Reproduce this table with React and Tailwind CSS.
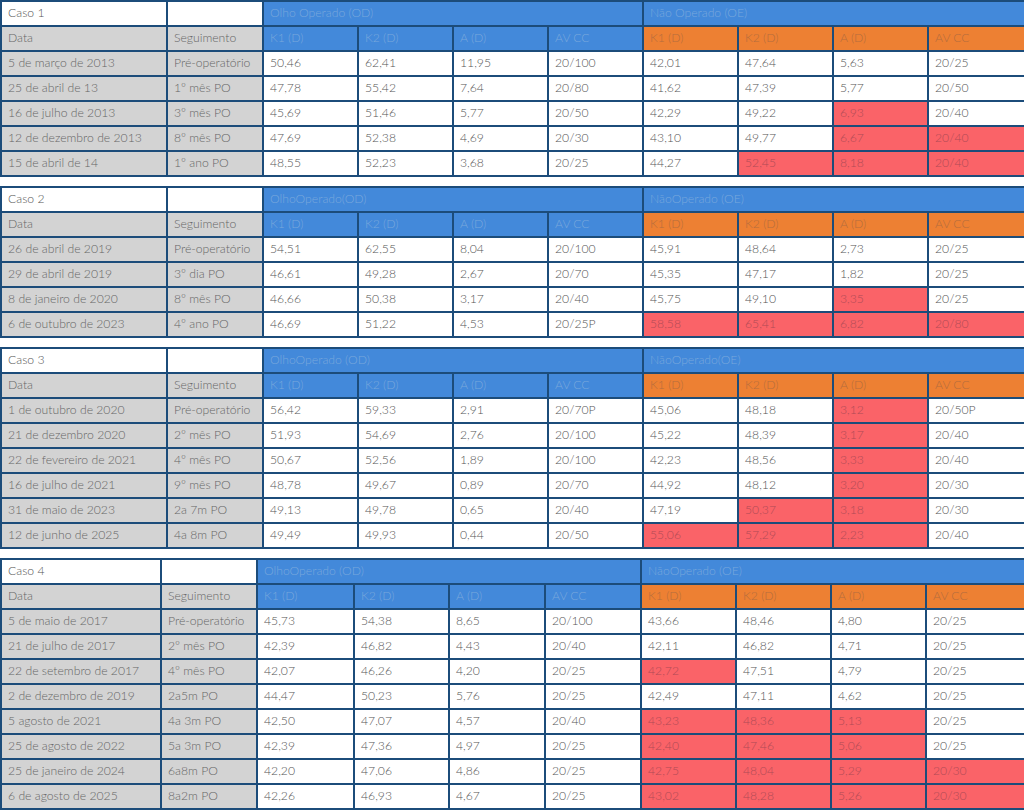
import React from "react";

const WIDE = [166, 96, 95, 95, 95, 95, 95, 95, 95, 97];
const NARROW = [160, 96, 97, 95, 96, 96, 95, 95, 95, 99];

// oe mask: "x" marks a red cell among the 4 OE values
const casos = [
  {
    title: "Caso 1",
    od: "Olho Operado (OD)",
    oe: "Não Operado (OE)",
    widths: WIDE,
    rows: [
      ["5 de março de 2013", "Pré-operatório", ["50,46", "62,41", "11,95", "20/100"], ["42,01", "47,64", "5,63", "20/25"], "...."],
      ["25 de abril de 13", "1º mês PO", ["47,78", "55,42", "7,64", "20/80"], ["41,62", "47,39", "5,77", "20/50"], "...."],
      ["16 de julho de 2013", "3º mês PO", ["45,69", "51,46", "5,77", "20/50"], ["42,29", "49,22", "6,93", "20/40"], "..x."],
      ["12 de dezembro de 2013", "8º mês PO", ["47,69", "52,38", "4,69", "20/30"], ["43,10", "49,77", "6,67", "20/40"], "..xx"],
      ["15 de abril de 14", "1º ano PO", ["48,55", "52,23", "3,68", "20/25"], ["44,27", "52,45", "8,18", "20/40"], ".xxx"],
    ],
  },
  {
    title: "Caso 2",
    od: "OlhoOperado(OD)",
    oe: "NãoOperado (OE)",
    widths: WIDE,
    rows: [
      ["26 de abril de 2019", "Pré-operatório", ["54,51", "62,55", "8,04", "20/100"], ["45,91", "48,64", "2,73", "20/25"], "...."],
      ["29 de abril de 2019", "3º dia PO", ["46,61", "49,28", "2,67", "20/70"], ["45,35", "47,17", "1,82", "20/25"], "...."],
      ["8 de janeiro de 2020", "8º mês PO", ["46,66", "50,38", "3,17", "20/40"], ["45,75", "49,10", "3,35", "20/25"], "..x."],
      ["6 de outubro de 2023", "4º ano PO", ["46,69", "51,22", "4,53", "20/25P"], ["58,58", "65,41", "6,82", "20/80"], "xxxx"],
    ],
  },
  {
    title: "Caso 3",
    od: "OlhoOperado (OD)",
    oe: "NãoOperado(OE)",
    widths: WIDE,
    rows: [
      ["1 de outubro de 2020", "Pré-operatório", ["56,42", "59,33", "2,91", "20/70P"], ["45,06", "48,18", "3,12", "20/50P"], "..x."],
      ["21 de dezembro 2020", "2º mês PO", ["51,93", "54,69", "2,76", "20/100"], ["45,22", "48,39", "3,17", "20/40"], "..x."],
      ["22 de fevereiro de 2021", "4º mês PO", ["50,67", "52,56", "1,89", "20/100"], ["42,23", "48,56", "3,33", "20/40"], "..x."],
      ["16 de julho de 2021", "9º mês PO", ["48,78", "49,67", "0,89", "20/70"], ["44,92", "48,12", "3,20", "20/30"], "..x."],
      ["31 de maio de 2023", "2a 7m PO", ["49,13", "49,78", "0,65", "20/40"], ["47,19", "50,37", "3,18", "20/30"], ".xx."],
      ["12 de junho de 2025", "4a 8m PO", ["49,49", "49,93", "0,44", "20/50"], ["55,06", "57,29", "2,23", "20/40"], "xxx."],
    ],
  },
  {
    title: "Caso 4",
    od: "OlhoOperado (OD)",
    oe: "NãoOperado (OE)",
    widths: NARROW,
    rows: [
      ["5 de maio de 2017", "Pré-operatório", ["45,73", "54,38", "8,65", "20/100"], ["43,66", "48,46", "4,80", "20/25"], "...."],
      ["21 de julho de 2017", "2º mês PO", ["42,39", "46,82", "4,43", "20/40"], ["42,11", "46,82", "4,71", "20/25"], "...."],
      ["22 de setembro de 2017", "4º mês PO", ["42,07", "46,26", "4,20", "20/25"], ["42,72", "47,51", "4,79", "20/25"], "x..."],
      ["2 de dezembro de 2019", "2a5m PO", ["44,47", "50,23", "5,76", "20/25"], ["42,49", "47,11", "4,62", "20/25"], "...."],
      ["5 agosto de 2021", "4a 3m PO", ["42,50", "47,07", "4,57", "20/40"], ["43,23", "48,36", "5,13", "20/25"], "xxx."],
      ["25 de agosto de 2022", "5a 3m PO", ["42,39", "47,36", "4,97", "20/25"], ["42,40", "47,46", "5,06", "20/25"], "xxx."],
      ["25 de janeiro de 2024", "6a8m PO", ["42,20", "47,06", "4,86", "20/25"], ["42,75", "48,04", "5,29", "20/30"], "xxxx"],
      ["6 de agosto de 2025", "8a2m PO", ["42,26", "46,93", "4,67", "20/25"], ["43,02", "48,28", "5,26", "20/30"], "xxxx"],
    ],
  },
];

const cell = "border-2 border-[#1c4c7a] px-[6px] h-[25px] whitespace-nowrap overflow-hidden";
const white = "bg-white text-[#555555]";
const gray = "bg-[#d3d3d3] text-[#666666]";
const blue = "bg-[#4389da] text-[#79a8dc]";
const orange = "bg-[#ed8033] text-[#b46d3e]";
const red = "bg-[#fa6368] text-[#b04b56]";

function CasoTable({ caso }) {
  return (
    <table className="w-[1024px] table-fixed border-collapse border-2 border-[#1c4c7a]">
      <colgroup>
        {caso.widths.map((w, i) => (
          <col key={i} style={{ width: w }} />
        ))}
      </colgroup>
      <tbody>
        <tr>
          <td className={`${cell} ${white}`}>{caso.title}</td>
          <td className={`${cell} ${white}`}></td>
          <td colSpan={4} className={`${cell} ${blue}`}>{caso.od}</td>
          <td colSpan={4} className={`${cell} ${blue}`}>{caso.oe}</td>
        </tr>
        <tr>
          <td className={`${cell} ${gray}`}>Data</td>
          <td className={`${cell} ${gray}`}>Seguimento</td>
          {["K1 (D)", "K2 (D)", "A (D)", "AV CC"].map((h) => (
            <td key={"od" + h} className={`${cell} ${blue}`}>{h}</td>
          ))}
          {["K1 (D)", "K2 (D)", "A (D)", "AV CC"].map((h) => (
            <td key={"oe" + h} className={`${cell} ${orange}`}>{h}</td>
          ))}
        </tr>
        {caso.rows.map((r, i) => (
          <tr key={i}>
            <td className={`${cell} ${gray}`}>{r[0]}</td>
            <td className={`${cell} ${gray}`}>{r[1]}</td>
            {r[2].map((v, j) => (
              <td key={"a" + j} className={`${cell} ${white}`}>{v}</td>
            ))}
            {r[3].map((v, j) => (
              <td key={"b" + j} className={`${cell} ${r[4][j] === "x" ? red : white}`}>{v}</td>
            ))}
          </tr>
        ))}
      </tbody>
    </table>
  );
}

export default function App() {
  return (
    <div className="w-[1024px] h-[810px] overflow-hidden bg-white font-['Lato','Liberation_Sans',sans-serif] font-light text-[12.2px] leading-none">
      <div className="flex flex-col gap-[9px]">
        {casos.map((c) => (
          <CasoTable key={c.title} caso={c} />
        ))}
      </div>
    </div>
  );
}
